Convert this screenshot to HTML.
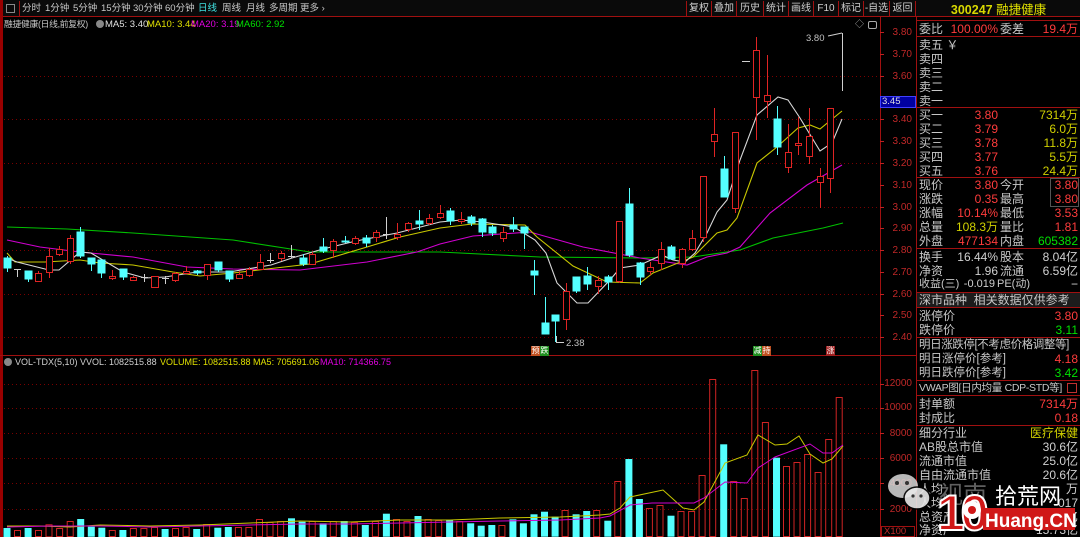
<!DOCTYPE html>
<html><head><meta charset="utf-8"><style>
*{margin:0;padding:0;box-sizing:border-box}
body{width:1080px;height:537px;background:#000;overflow:hidden;position:relative;font-family:"Liberation Sans","Noto Sans CJK SC",sans-serif;color:#c0c0c0}
.a{position:absolute;white-space:nowrap;line-height:1}
.t{font-size:9.5px;top:4px;color:#c8c8c8}
.btn{position:absolute;top:1px;height:16px;font-size:10px;color:#d0d0d0;border-left:1px solid #a01010;text-align:center;line-height:16px}
.ax{position:absolute;right:168px;font-size:10px;color:#c02828;line-height:1;text-align:right}
.r{position:absolute;font-size:12px;line-height:14px;white-space:nowrap}
.l{color:#c8c8c8}
.v{text-align:right}
.red{color:#ff3c3c}.yel{color:#d0d000}.grn{color:#00e000}.wht{color:#d0d0d0}
.sep{position:absolute;left:917px;width:163px;height:1px;background:#a01010}
</style></head><body>
<div class="a" style="left:0;top:0;width:1080px;height:17px;background:#0a0a0a;border-bottom:1px solid #a01010"></div>
<div class="a" style="left:0;top:0;width:3px;height:537px;background:#900"></div>
<div class="a" style="left:6px;top:4px;width:9px;height:9px;border:1px solid #888"></div>
<div class="a" style="left:19px;top:1px;width:1px;height:16px;background:#a01010"></div>
<span class="a t" style="left:22px">分时</span>
<span class="a t" style="left:45px">1分钟</span>
<span class="a t" style="left:73px">5分钟</span>
<span class="a t" style="left:101px">15分钟</span>
<span class="a t" style="left:133px">30分钟</span>
<span class="a t" style="left:165px">60分钟</span>
<span class="a t" style="left:198px;color:#40e0e0">日线</span>
<span class="a t" style="left:222px">周线</span>
<span class="a t" style="left:246px">月线</span>
<span class="a t" style="left:269px">多周期</span>
<span class="a t" style="left:300px">更多 ›</span>
<div class="btn" style="left:686px;width:25px">复权</div>
<div class="btn" style="left:711px;width:25px">叠加</div>
<div class="btn" style="left:736px;width:27px">历史</div>
<div class="btn" style="left:763px;width:25px">统计</div>
<div class="btn" style="left:788px;width:25px">画线</div>
<div class="btn" style="left:813px;width:25px">F10</div>
<div class="btn" style="left:838px;width:25px">标记</div>
<div class="btn" style="left:863px;width:26px">-自选</div>
<div class="btn" style="left:889px;width:27px;border-right:1px solid #a01010">返回</div>
<span class="a" style="left:4px;top:20px;font-size:8.8px;color:#c8c8c8;letter-spacing:-0.3px">融捷健康(日线,前复权)</span>
<div class="a" style="left:96px;top:20px;width:8px;height:8px;border-radius:50%;background:#888"></div>
<span class="a" style="left:105px;top:20px;font-size:9.5px;color:#e0e0e0">MA5: 3.40</span>
<span class="a" style="left:147px;top:20px;font-size:9.5px;color:#e0e000">MA10: 3.44</span>
<span class="a" style="left:191px;top:20px;font-size:9.5px;color:#e000e0">MA20: 3.19</span>
<span class="a" style="left:236px;top:20px;font-size:9.5px;color:#00e000">MA60: 2.92</span>
<div class="a" style="left:4px;top:358px;width:8px;height:8px;border-radius:50%;background:#888"></div>
<span class="a" style="left:15px;top:358px;font-size:9px;color:#d0d0d0">VOL-TDX(5,10) VVOL: 1082515.88</span>
<span class="a" style="left:160px;top:358px;font-size:9px;color:#e0e000">VOLUME: 1082515.88 MA5: 705691.06</span>
<span class="a" style="left:320px;top:358px;font-size:9px;color:#e000e0">MA10: 714366.75</span>

<svg class="a" style="left:0;top:0" width="1080" height="537">
<g stroke="#7a0000" stroke-dasharray="1,3" stroke-width="1">
<line x1="4" x2="878" y1="76.5" y2="76.5"/><line x1="4" x2="878" y1="119.5" y2="119.5"/><line x1="4" x2="878" y1="163.5" y2="163.5"/><line x1="4" x2="878" y1="207.5" y2="207.5"/><line x1="4" x2="878" y1="250.5" y2="250.5"/><line x1="4" x2="878" y1="294.5" y2="294.5"/><line x1="4" x2="878" y1="337.5" y2="337.5"/>
<line x1="4" x2="878" y1="384.5" y2="384.5"/><line x1="4" x2="878" y1="408.5" y2="408.5"/><line x1="4" x2="878" y1="433.5" y2="433.5"/><line x1="4" x2="878" y1="458.5" y2="458.5"/><line x1="4" x2="878" y1="483.5" y2="483.5"/><line x1="4" x2="878" y1="509.5" y2="509.5"/>
</g>
<line x1="0" x2="917" y1="355.5" y2="355.5" stroke="#a01010"/>
<line x1="880.5" x2="880.5" y1="17" y2="537" stroke="#a01010"/>
<line x1="916.5" x2="916.5" y1="17" y2="537" stroke="#a01010"/>
<g stroke="#c02020">
<line x1="880" x2="884" y1="32.5" y2="32.5"/><line x1="880" x2="884" y1="54.5" y2="54.5"/><line x1="880" x2="884" y1="76.5" y2="76.5"/><line x1="880" x2="884" y1="119.5" y2="119.5"/><line x1="880" x2="884" y1="141.5" y2="141.5"/><line x1="880" x2="884" y1="163.5" y2="163.5"/><line x1="880" x2="884" y1="185.5" y2="185.5"/><line x1="880" x2="884" y1="207.5" y2="207.5"/><line x1="880" x2="884" y1="228.5" y2="228.5"/><line x1="880" x2="884" y1="250.5" y2="250.5"/><line x1="880" x2="884" y1="272.5" y2="272.5"/><line x1="880" x2="884" y1="294.5" y2="294.5"/><line x1="880" x2="884" y1="315.5" y2="315.5"/><line x1="880" x2="884" y1="337.5" y2="337.5"/>
<line x1="880" x2="884" y1="384.5" y2="384.5"/><line x1="880" x2="884" y1="408.5" y2="408.5"/><line x1="880" x2="884" y1="433.5" y2="433.5"/><line x1="880" x2="884" y1="458.5" y2="458.5"/><line x1="880" x2="884" y1="483.5" y2="483.5"/><line x1="880" x2="884" y1="509.5" y2="509.5"/>
</g>
<g fill="none" stroke-width="1.1">
<polyline stroke="#00c000" points="7,227 67,229 133,233 233,240 310,252 440,252 540,257 640,258 693,257 740,250 773,238 823,228 843,223"/>
<polyline stroke="#d000d0" points="7,240 40,247 80,252 133,257 187,267 233,269 300,270 367,262 417,252 440,244 473,236 530,232 583,247 640,258 687,265 707,257 727,253 740,247 770,213 807,185 842,165"/>
<polyline stroke="#c8c800" points="7,253 15,262 45,262 80,260 100,263 133,265 173,272 200,276 233,273 267,269 310,264 367,247 400,237 440,228 472,224 525,225 537,237 573,266 607,282 640,283 653,273 673,265 693,257 717,233 727,230 737,218 757,163 777,147 798,128 810,125 820,129 842,111"/>
<polyline stroke="#d8d8d8" points="7,258 17,262 49,270 59,270 80,252 91,253 123,272 145,278 165,277 197,272 229,272 271,265 292,258 323,249 356,241 397,233 440,222 461,220 483,222 514,227 535,240 546,253 557,283 577,303 588,303 610,280 620,268 640,265 662,255 673,260 685,262 695,253 707,233 717,212 727,200 740,160 757,115 778,97 788,100 800,118 820,151 832,143 842,119"/>
</g>
<g stroke-width="1">
<g stroke="#54ffff" fill="#54ffff">
<line x1="7.5" x2="7.5" y1="256" y2="272"/><rect x="4" y="258" width="7" height="10"/>
<line x1="28.5" x2="28.5" y1="271" y2="282"/><rect x="25" y="271" width="7" height="8"/>
<line x1="80.5" x2="80.5" y1="227" y2="258"/><rect x="77" y="232" width="7" height="24"/>
<line x1="91.5" x2="91.5" y1="258" y2="271"/><rect x="88" y="258" width="7" height="6"/>
<line x1="101.5" x2="101.5" y1="260" y2="278"/><rect x="98" y="260" width="7" height="13"/>
<line x1="123.5" x2="123.5" y1="269" y2="280"/><rect x="120" y="269" width="7" height="8"/>
<line x1="197.5" x2="197.5" y1="270" y2="275"/><rect x="194" y="271" width="7" height="2"/>
<line x1="218.5" x2="218.5" y1="262" y2="272"/><rect x="215" y="262" width="7" height="8"/>
<line x1="229.5" x2="229.5" y1="271" y2="282"/><rect x="226" y="271" width="7" height="8"/>
<line x1="303.5" x2="303.5" y1="254" y2="266"/><rect x="300" y="258" width="7" height="6"/>
<line x1="323.5" x2="323.5" y1="238" y2="253"/><rect x="320" y="247" width="7" height="4"/>
<line x1="345.5" x2="345.5" y1="236" y2="243"/><rect x="342" y="241" width="7" height="1"/>
<line x1="366.5" x2="366.5" y1="235" y2="247"/><rect x="363" y="238" width="7" height="5"/>
<line x1="419.5" x2="419.5" y1="210" y2="230"/><rect x="416" y="221" width="7" height="3"/>
<line x1="450.5" x2="450.5" y1="208" y2="225"/><rect x="447" y="211" width="7" height="10"/>
<line x1="471.5" x2="471.5" y1="215" y2="226"/><rect x="468" y="217" width="7" height="6"/>
<line x1="482.5" x2="482.5" y1="218" y2="237"/><rect x="479" y="219" width="7" height="13"/>
<line x1="492.5" x2="492.5" y1="225" y2="236"/><rect x="489" y="227" width="7" height="6"/>
<line x1="513.5" x2="513.5" y1="217" y2="232"/><rect x="510" y="225" width="7" height="4"/>
<line x1="524.5" x2="524.5" y1="227" y2="249"/><rect x="521" y="227" width="7" height="6"/>
<line x1="534.5" x2="534.5" y1="260" y2="295"/><rect x="531" y="271" width="7" height="4"/>
<line x1="545.5" x2="545.5" y1="297" y2="334"/><rect x="542" y="323" width="7" height="11"/>
<line x1="555.5" x2="555.5" y1="315" y2="342"/><rect x="552" y="315" width="7" height="6"/>
<line x1="576.5" x2="576.5" y1="277" y2="293"/><rect x="573" y="277" width="7" height="14"/>
<line x1="587.5" x2="587.5" y1="267" y2="290"/><rect x="584" y="276" width="7" height="8"/>
<line x1="608.5" x2="608.5" y1="275" y2="290"/><rect x="605" y="277" width="7" height="5"/>
<line x1="629.5" x2="629.5" y1="188" y2="257"/><rect x="626" y="204" width="7" height="51"/>
<line x1="640.5" x2="640.5" y1="262" y2="285"/><rect x="637" y="263" width="7" height="14"/>
<line x1="671.5" x2="671.5" y1="245" y2="260"/><rect x="668" y="247" width="7" height="12"/>
<line x1="724.5" x2="724.5" y1="156" y2="197"/><rect x="721" y="169" width="7" height="28"/>
<line x1="777.5" x2="777.5" y1="106" y2="155"/><rect x="774" y="119" width="7" height="28"/>
</g>
<g stroke="#e02424" fill="#000">
<line x1="38.5" x2="38.5" y1="271" y2="282"/><rect x="35.5" y="273.5" width="6" height="8"/>
<line x1="49.5" x2="49.5" y1="248" y2="278"/><rect x="46.5" y="256.5" width="6" height="16"/>
<line x1="59.5" x2="59.5" y1="246" y2="256"/><rect x="56.5" y="249.5" width="6" height="5"/>
<line x1="70.5" x2="70.5" y1="235" y2="264"/><rect x="67.5" y="238.5" width="6" height="23"/>
<line x1="112.5" x2="112.5" y1="270" y2="280"/><rect x="109.5" y="276.5" width="6" height="2"/>
<line x1="133.5" x2="133.5" y1="276" y2="281"/><rect x="130.5" y="277.5" width="6" height="3"/>
<rect x="151.5" y="276.5" width="7" height="11"/>
<line x1="175.5" x2="175.5" y1="272" y2="282"/><rect x="172.5" y="273.5" width="6" height="7"/>
<line x1="186.5" x2="186.5" y1="266" y2="274"/><rect x="183.5" y="271.5" width="6" height="2"/>
<line x1="207.5" x2="207.5" y1="264" y2="280"/><rect x="204.5" y="264.5" width="6" height="11"/>
<line x1="239.5" x2="239.5" y1="271" y2="279"/><rect x="236.5" y="274.5" width="6" height="4"/>
<line x1="249.5" x2="249.5" y1="267" y2="277"/><rect x="246.5" y="269.5" width="6" height="6"/>
<line x1="260.5" x2="260.5" y1="254" y2="270"/><rect x="257.5" y="262.5" width="6" height="7"/>
<line x1="281.5" x2="281.5" y1="251" y2="261"/><rect x="278.5" y="253.5" width="6" height="5"/>
<line x1="312.5" x2="312.5" y1="252" y2="265"/><rect x="309.5" y="254.5" width="6" height="10"/>
<line x1="333.5" x2="333.5" y1="239" y2="258"/><rect x="330.5" y="241.5" width="6" height="9"/>
<line x1="355.5" x2="355.5" y1="236" y2="245"/><rect x="352.5" y="238.5" width="6" height="5"/>
<line x1="376.5" x2="376.5" y1="230" y2="242"/><rect x="373.5" y="232.5" width="6" height="5"/>
<line x1="397.5" x2="397.5" y1="223" y2="240"/><rect x="394.5" y="234.5" width="6" height="3"/>
<line x1="408.5" x2="408.5" y1="222" y2="232"/><rect x="405.5" y="223.5" width="6" height="6"/>
<line x1="429.5" x2="429.5" y1="214" y2="225"/><rect x="426.5" y="218.5" width="6" height="5"/>
<line x1="440.5" x2="440.5" y1="205" y2="219"/><rect x="437.5" y="213.5" width="6" height="4"/>
<line x1="461.5" x2="461.5" y1="212" y2="224"/><rect x="458.5" y="219.5" width="6" height="2"/>
<line x1="503.5" x2="503.5" y1="227" y2="242"/><rect x="500.5" y="232.5" width="6" height="6"/>
<line x1="566.5" x2="566.5" y1="283" y2="330"/><rect x="563.5" y="291.5" width="6" height="28"/>
<line x1="598.5" x2="598.5" y1="276" y2="294"/><rect x="595.5" y="280.5" width="6" height="6"/>
<line x1="619.5" x2="619.5" y1="221" y2="283"/><rect x="616.5" y="221.5" width="6" height="60"/>
<line x1="650.5" x2="650.5" y1="262" y2="275"/><rect x="647.5" y="267.5" width="6" height="4"/>
<line x1="661.5" x2="661.5" y1="242" y2="270"/><rect x="658.5" y="249.5" width="6" height="14"/>
<line x1="682.5" x2="682.5" y1="248" y2="268"/><rect x="679.5" y="249.5" width="6" height="14"/>
<line x1="692.5" x2="692.5" y1="230" y2="251"/><rect x="689.5" y="238.5" width="6" height="11"/>
<line x1="703.5" x2="703.5" y1="176" y2="242"/><rect x="700.5" y="176.5" width="6" height="61"/>
<line x1="714.5" x2="714.5" y1="108" y2="157"/><rect x="711.5" y="134.5" width="6" height="7"/>
<line x1="735.5" x2="735.5" y1="132" y2="213"/><rect x="732.5" y="132.5" width="6" height="76"/>
<line x1="756.5" x2="756.5" y1="37" y2="140"/><rect x="753.5" y="50.5" width="6" height="47"/>
<line x1="767.5" x2="767.5" y1="55" y2="118"/><rect x="764.5" y="95.5" width="6" height="6"/>
<line x1="788.5" x2="788.5" y1="124" y2="173"/><rect x="785.5" y="152.5" width="6" height="15"/>
<line x1="798.5" x2="798.5" y1="117" y2="155"/><rect x="795.5" y="143.5" width="6" height="2"/>
<line x1="809.5" x2="809.5" y1="108" y2="164"/><rect x="806.5" y="136.5" width="6" height="20"/>
<line x1="820.5" x2="820.5" y1="168" y2="208"/><rect x="817.5" y="176.5" width="6" height="6"/>
<line x1="830.5" x2="830.5" y1="108" y2="193"/><rect x="827.5" y="108.5" width="6" height="70"/>
</g>
<g stroke="#d0d0d0">
<line x1="14" x2="21" y1="269.5" y2="269.5"/><line x1="17.5" x2="17.5" y1="269" y2="277"/>
<line x1="141" x2="148" y1="277.5" y2="277.5"/><line x1="144.5" x2="144.5" y1="274" y2="282"/>
<line x1="162" x2="169" y1="278.5" y2="278.5"/><line x1="165.5" x2="165.5" y1="276" y2="284"/>
<line x1="267" x2="274" y1="260.5" y2="260.5"/><line x1="270.5" x2="270.5" y1="253" y2="263"/>
<line x1="288" x2="295" y1="256.5" y2="256.5"/><line x1="291.5" x2="291.5" y1="245" y2="258"/>
<line x1="383" x2="390" y1="234.5" y2="234.5"/><line x1="386.5" x2="386.5" y1="217" y2="239"/>
<line x1="742" x2="750" y1="61.5" y2="61.5"/>
<line x1="842.5" x2="842.5" y1="33" y2="91"/>
<line x1="828" x2="842" y1="36" y2="33"/>
<line x1="556.5" x2="556.5" y1="336" y2="342"/><line x1="556" x2="564" y1="342.5" y2="342.5"/>
</g>
</g>
<text x="806" y="41" font-size="9.5" fill="#c0c0c0" font-family="Liberation Sans">3.80</text>
<text x="566" y="346" font-size="9.5" fill="#c0c0c0" font-family="Liberation Sans">2.38</text>
<g stroke-width="1">
<g fill="#54ffff">
<rect x="3.5" y="528" width="7" height="9"/><rect x="24.6" y="528" width="7" height="9"/><rect x="77.2" y="519" width="7" height="18"/><rect x="87.8" y="526.7" width="7" height="10"/><rect x="98.3" y="527.7" width="7" height="10"/><rect x="119.4" y="530" width="7" height="7"/><rect x="161.6" y="529" width="7" height="8"/><rect x="193.2" y="529" width="7" height="8"/><rect x="214.3" y="527.7" width="7" height="10"/><rect x="224.8" y="527" width="7" height="10"/><rect x="288" y="518.3" width="7" height="19"/><rect x="298.6" y="521.7" width="7" height="16"/><rect x="319.6" y="523.3" width="7" height="14"/><rect x="340.7" y="521" width="7" height="16"/><rect x="361.8" y="525" width="7" height="12"/><rect x="382.9" y="513.7" width="7" height="23"/><rect x="414.5" y="516" width="7" height="21"/><rect x="446.1" y="520" width="7" height="17"/><rect x="467.2" y="523.3" width="7" height="14"/><rect x="477.7" y="525.7" width="7" height="11"/><rect x="488.3" y="525" width="7" height="12"/><rect x="509.4" y="519.3" width="7" height="18"/><rect x="519.9" y="523.3" width="7" height="14"/><rect x="530.5" y="514.3" width="7" height="23"/><rect x="541" y="511.7" width="7" height="25"/><rect x="551.6" y="516.7" width="7" height="20"/><rect x="572.6" y="514.3" width="7" height="23"/><rect x="583.2" y="511" width="7" height="26"/><rect x="604.3" y="520.7" width="7" height="16"/><rect x="625.4" y="459" width="7" height="78"/><rect x="635.9" y="499" width="7" height="38"/><rect x="667.5" y="515.7" width="7" height="21"/><rect x="720.2" y="444.3" width="7" height="93"/><rect x="773" y="457.7" width="7" height="79"/>
</g>
<g stroke="#d02424" fill="none">
<rect x="14.5" y="530.5" width="6" height="6"/><rect x="35.5" y="530.5" width="6" height="6"/><rect x="46" y="524.8" width="6" height="12"/><rect x="56.6" y="528.5" width="6" height="8"/><rect x="67.2" y="521.5" width="6" height="15"/><rect x="109.3" y="530.5" width="6" height="6"/><rect x="130.4" y="528.5" width="6" height="8"/><rect x="140.9" y="528.5" width="6" height="8"/><rect x="151.5" y="527.5" width="6" height="9"/><rect x="172.5" y="528.5" width="6" height="8"/><rect x="183.1" y="527.5" width="6" height="9"/><rect x="203.6" y="524.5" width="6" height="12"/><rect x="235.4" y="527.5" width="6" height="9"/><rect x="245.9" y="527.5" width="6" height="9"/><rect x="256.5" y="519.5" width="6" height="17"/><rect x="267" y="522.5" width="6" height="14"/><rect x="277.6" y="521.5" width="6" height="15"/><rect x="309.2" y="521.5" width="6" height="15"/><rect x="330.3" y="521.5" width="6" height="15"/><rect x="351.4" y="522.5" width="6" height="14"/><rect x="372.4" y="521.5" width="6" height="15"/><rect x="393.5" y="519.5" width="6" height="17"/><rect x="404" y="521.5" width="6" height="15"/><rect x="425.1" y="519.5" width="6" height="17"/><rect x="435.7" y="520.5" width="6" height="16"/><rect x="456.7" y="521.5" width="6" height="15"/><rect x="498.9" y="525.5" width="6" height="11"/><rect x="562.1" y="510.5" width="6" height="26"/><rect x="593.7" y="510.5" width="6" height="26"/><rect x="614.8" y="481.5" width="6" height="55"/><rect x="646.4" y="508.5" width="6" height="28"/><rect x="657" y="505.5" width="6" height="31"/><rect x="678" y="511.5" width="6" height="25"/><rect x="688.6" y="511.5" width="6" height="25"/><rect x="699.1" y="475.5" width="6" height="61"/><rect x="709.7" y="379.5" width="6" height="157"/><rect x="730.7" y="481.5" width="6" height="55"/><rect x="741.3" y="498.5" width="6" height="38"/><rect x="751.8" y="370.5" width="6" height="166"/><rect x="762.4" y="422.5" width="6" height="114"/><rect x="783.5" y="466.5" width="6" height="70"/><rect x="794" y="462.5" width="6" height="74"/><rect x="804.6" y="454.5" width="6" height="82"/><rect x="815.1" y="472.5" width="6" height="64"/><rect x="825.7" y="439.5" width="6" height="97"/><rect x="836.2" y="397.5" width="6" height="139"/>
</g>
<polyline fill="none" stroke="#c8c800" points="7,526 40,526 70,527 100,525 150,526 200,525 250,523 300,521 350,522 400,520 450,520 500,518 560,517 600,515 610,514 620,508 630,497 663,490 683,508 694,510 704,502 725,463 747,455 758,435 775,445 787,444 799,436 810,454 823,463 832,459 843,446"/>
<polyline fill="none" stroke="#d000d0" points="7,527 50,526 100,526 150,527 200,526 250,525 300,524 350,524 400,523 450,522 500,521 560,520 600,518 610,516 630,505 652,503 694,503 704,498 725,482 747,483 758,468 775,457 810,444 823,453 832,453 843,445"/>
</g>
</svg>
<div class="a" style="left:531px;top:346px;width:9px;height:10px;background:#c05020;color:#fff;font-size:8px;text-align:center;line-height:10px">预</div>
<div class="a" style="left:540px;top:346px;width:9px;height:10px;background:#209020;color:#fff;font-size:8px;text-align:center;line-height:10px">跌</div>
<div class="a" style="left:753px;top:346px;width:9px;height:10px;background:#209020;color:#fff;font-size:8px;text-align:center;line-height:10px">减</div>
<div class="a" style="left:762px;top:346px;width:9px;height:10px;background:#c05020;color:#fff;font-size:8px;text-align:center;line-height:10px">持</div>
<div class="a" style="left:826px;top:346px;width:9px;height:10px;background:#a02020;color:#fff;font-size:8px;text-align:center;line-height:10px">涨</div>
<div class="a" style="left:855px;top:20px;color:#aaa;font-size:9px">◇</div>
<div class="a" style="left:868px;top:21px;width:9px;height:8px;border:1px solid #aaa;border-radius:2px"></div>
<div class="ax" style="top:28px">3.80</div><div class="ax" style="top:50px">3.70</div><div class="ax" style="top:72px">3.60</div>
<div class="ax" style="top:115px">3.40</div><div class="ax" style="top:137px">3.30</div><div class="ax" style="top:159px">3.20</div><div class="ax" style="top:181px">3.10</div><div class="ax" style="top:203px">3.00</div><div class="ax" style="top:224px">2.90</div><div class="ax" style="top:246px">2.80</div><div class="ax" style="top:268px">2.70</div><div class="ax" style="top:290px">2.60</div><div class="ax" style="top:311px">2.50</div><div class="ax" style="top:333px">2.40</div>
<div class="a" style="left:880px;top:96px;width:36px;height:12px;background:#0000a0;border:1px solid #4040ff;color:#ddd;font-size:9.5px;line-height:10px;padding-left:1px">3.45</div>
<div class="ax" style="top:379px">12000</div><div class="ax" style="top:403px">10000</div><div class="ax" style="top:429px">8000</div><div class="ax" style="top:454px">6000</div><div class="ax" style="top:479px">4000</div><div class="ax" style="top:505px">2000</div>
<div class="a" style="left:881px;top:526px;width:34px;height:11px;border:1px solid #a01010;color:#c02828;font-size:9.5px;padding-left:2px">X100</div>

<div class="a" style="left:917px;top:0;width:163px;height:20px;text-align:center;font-size:12.5px;line-height:20px;color:#d8d800;font-weight:bold">300247 <span style="font-weight:normal;color:#e0e000">融捷健康</span></div>
<div class="sep" style="top:20px"></div>
<div class="r l" style="left:919px;top:22px">委比</div><div class="r red v" style="left:940px;width:58px;top:22px">100.00%</div><div class="r l" style="left:1000px;top:22px">委差</div><div class="r red v" style="left:1020px;width:58px;top:22px">19.4万</div>
<div class="sep" style="top:36px"></div>
<div class="r l" style="left:919px;top:38px">卖五 ￥</div><div class="r l" style="left:919px;top:52px">卖四</div><div class="r l" style="left:919px;top:66px">卖三</div><div class="r l" style="left:919px;top:80px">卖二</div><div class="r l" style="left:919px;top:94px">卖一</div>
<div class="sep" style="top:107px"></div>
<div class="r l" style="left:919px;top:108px">买一</div><div class="r red v" style="left:940px;width:58px;top:108px">3.80</div><div class="r yel v" style="left:1010px;width:68px;top:108px">7314万</div>
<div class="r l" style="left:919px;top:122px">买二</div><div class="r red v" style="left:940px;width:58px;top:122px">3.79</div><div class="r yel v" style="left:1010px;width:68px;top:122px">6.0万</div>
<div class="r l" style="left:919px;top:136px">买三</div><div class="r red v" style="left:940px;width:58px;top:136px">3.78</div><div class="r yel v" style="left:1010px;width:68px;top:136px">11.8万</div>
<div class="r l" style="left:919px;top:150px">买四</div><div class="r red v" style="left:940px;width:58px;top:150px">3.77</div><div class="r yel v" style="left:1010px;width:68px;top:150px">5.5万</div>
<div class="r l" style="left:919px;top:164px">买五</div><div class="r red v" style="left:940px;width:58px;top:164px">3.76</div><div class="r yel v" style="left:1010px;width:68px;top:164px">24.4万</div>
<div class="sep" style="top:177px"></div>
<div class="r l" style="left:919px;top:178px">现价</div><div class="r red v" style="left:940px;width:58px;top:178px">3.80</div><div class="r l" style="left:1000px;top:178px">今开</div><div class="r red v" style="left:1020px;width:58px;top:178px">3.80</div>
<div class="r l" style="left:919px;top:192px">涨跌</div><div class="r red v" style="left:940px;width:58px;top:192px">0.35</div><div class="r l" style="left:1000px;top:192px">最高</div><div class="r red v" style="left:1020px;width:58px;top:192px">3.80</div>
<div class="a" style="left:1050px;top:178px;width:29px;height:29px;border:1px solid #555"></div>
<div class="r l" style="left:919px;top:206px">涨幅</div><div class="r red v" style="left:940px;width:58px;top:206px">10.14%</div><div class="r l" style="left:1000px;top:206px">最低</div><div class="r red v" style="left:1020px;width:58px;top:206px">3.53</div>
<div class="r l" style="left:919px;top:220px">总量</div><div class="r yel v" style="left:940px;width:58px;top:220px">108.3万</div><div class="r l" style="left:1000px;top:220px">量比</div><div class="r red v" style="left:1020px;width:58px;top:220px">1.81</div>
<div class="r l" style="left:919px;top:234px">外盘</div><div class="r red v" style="left:940px;width:58px;top:234px">477134</div><div class="r l" style="left:1000px;top:234px">内盘</div><div class="r grn v" style="left:1020px;width:58px;top:234px">605382</div>
<div class="sep" style="top:248px"></div>
<div class="r l" style="left:919px;top:250px">换手</div><div class="r wht v" style="left:940px;width:58px;top:250px">16.44%</div><div class="r l" style="left:1000px;top:250px">股本</div><div class="r wht v" style="left:1020px;width:58px;top:250px">8.04亿</div>
<div class="r l" style="left:919px;top:264px">净资</div><div class="r wht v" style="left:940px;width:58px;top:264px">1.96</div><div class="r l" style="left:1000px;top:264px">流通</div><div class="r wht v" style="left:1020px;width:58px;top:264px">6.59亿</div>
<div class="r l" style="left:919px;top:277px;font-size:11px">收益(三)</div><div class="r wht v" style="left:940px;width:55px;top:277px;font-size:11px">-0.019</div><div class="r l" style="left:997px;top:277px;font-size:11px">PE(动)</div><div class="r wht v" style="left:1020px;width:58px;top:277px">−</div>
<div class="a" style="left:917px;top:292px;width:163px;height:16px;background:#1c1c1c;border-top:1px solid #a01010;border-bottom:1px solid #a01010"></div>
<div class="r l" style="left:919px;top:293px">深市品种&nbsp; 相关数据仅供参考</div>
<div class="r l" style="left:919px;top:309px">涨停价</div><div class="r red v" style="left:1010px;width:68px;top:309px">3.80</div>
<div class="r l" style="left:919px;top:323px">跌停价</div><div class="r grn v" style="left:1010px;width:68px;top:323px">3.11</div>
<div class="sep" style="top:337px"></div>
<div class="r l" style="left:919px;top:338px;font-size:11.5px;letter-spacing:-0.4px">明日涨跌停[不考虑价格调整等]</div>
<div class="r l" style="left:919px;top:352px;font-size:11.5px">明日涨停价[参考]</div><div class="r red v" style="left:1010px;width:68px;top:352px">4.18</div>
<div class="r l" style="left:919px;top:366px;font-size:11.5px">明日跌停价[参考]</div><div class="r grn v" style="left:1010px;width:68px;top:366px">3.42</div>
<div class="sep" style="top:380px"></div>
<div class="r l" style="left:919px;top:381px;font-size:10.5px;letter-spacing:-0.3px">VWAP图[日内均量 CDP-STD等]</div>
<div class="a" style="left:1067px;top:383px;width:10px;height:10px;border:1px solid #c03030"></div>
<div class="sep" style="top:395px"></div>
<div class="r l" style="left:919px;top:397px">封单额</div><div class="r red v" style="left:1010px;width:68px;top:397px">7314万</div>
<div class="r l" style="left:919px;top:411px">封成比</div><div class="r red v" style="left:1010px;width:68px;top:411px">0.18</div>
<div class="sep" style="top:425px"></div>
<div class="r l" style="left:919px;top:426px">细分行业</div><div class="r yel v" style="left:1010px;width:68px;top:426px">医疗保健</div>
<div class="r l" style="left:919px;top:440px">AB股总市值</div><div class="r wht v" style="left:1010px;width:68px;top:440px">30.6亿</div>
<div class="r l" style="left:919px;top:454px">流通市值</div><div class="r wht v" style="left:1010px;width:68px;top:454px">25.0亿</div>
<div class="r l" style="left:919px;top:468px">自由流通市值</div><div class="r wht v" style="left:1010px;width:68px;top:468px">20.6亿</div>
<div class="r l" style="left:919px;top:482px">人均</div><div class="r wht v" style="left:1010px;width:68px;top:482px">万</div>
<div class="r l" style="left:919px;top:496px">人均</div><div class="r wht v" style="left:1010px;width:68px;top:496px">017</div>
<div class="r l" style="left:919px;top:510px">总资产</div><div class="r wht v" style="left:1010px;width:68px;top:510px">亿</div>
<div class="r l" style="left:919px;top:523px">净资产</div><div class="r wht v" style="left:1010px;width:68px;top:523px">15.73亿</div>
<svg class="a" style="left:885px;top:470px" width="195" height="67">
<ellipse cx="18" cy="16" rx="15" ry="12" fill="#d8d8d8" opacity="0.85"/>
<ellipse cx="32" cy="28" rx="13" ry="11" fill="#e8e8e8" opacity="0.9" stroke="#000" stroke-width="1.5"/>
<circle cx="12" cy="13" r="2" fill="#333"/><circle cx="22" cy="13" r="2" fill="#333"/>
<circle cx="28" cy="26" r="1.6" fill="#333"/><circle cx="36" cy="26" r="1.6" fill="#333"/>
<text x="54" y="33" font-size="24" fill="#888" opacity="0.7" font-family="Noto Sans CJK SC,sans-serif">视南</text>
<text x="52" y="60" font-size="50" font-weight="bold" fill="#d01818" stroke="#fff" stroke-width="2" font-family="Liberation Sans,sans-serif" letter-spacing="-4">10</text>
<circle cx="87" cy="40" r="9" fill="#fff"/><circle cx="87" cy="40" r="4" fill="#d01818"/>
<text x="110" y="34" font-size="22" fill="#fff" font-family="Noto Sans CJK SC,sans-serif">拾荒网</text>
<rect x="98" y="38" width="92" height="22" fill="#d01818"/>
<text x="100" y="57" font-size="19" font-weight="bold" fill="#fff" font-family="Liberation Sans,sans-serif">Huang.CN</text>
</svg>
</body></html>
